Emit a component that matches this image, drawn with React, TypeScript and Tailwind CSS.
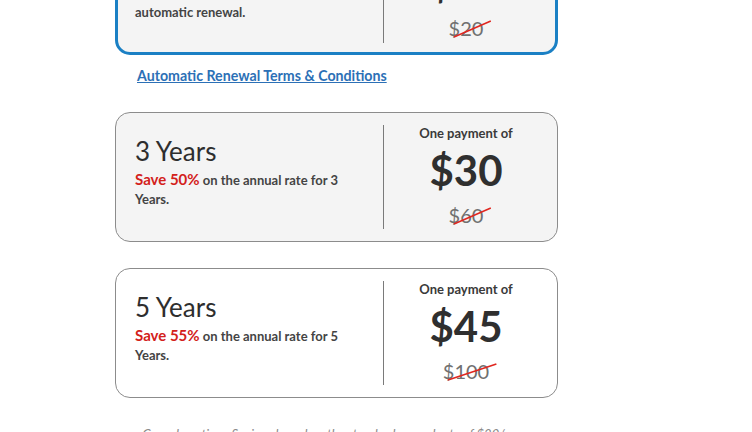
import React from "react";

interface PlanCardProps {
	title: string;
	save: string;
	rest: string;
	price: string;
	was: string;
	featured?: boolean;
	shaded?: boolean;
}

const StrikePrice = ({ value }: { value: string }) => (
	<span className="relative inline-block text-[20px] leading-[24px] text-[#707070]">
		{value}
		{/* red slash across the old price */}
		<svg
			className="absolute top-[5px] left-[5px] h-[16px] w-[calc(100%+2px)] overflow-visible"
			viewBox="0 0 100 100"
			preserveAspectRatio="none"
		>
			<line x1="0" y1="100" x2="100" y2="0" stroke="#e0261f" strokeWidth="1.6" vectorEffect="non-scaling-stroke" />
		</svg>
	</span>
);

const PlanCard = ({ title, save, rest, price, was, featured, shaded }: PlanCardProps) => (
	<div
		className={`flex h-[130px] w-[443px] rounded-[15px] ${
			featured ? "border-[3px] border-[#1b80c4]" : "border border-[#8c8c8c]"
		} ${shaded ? "bg-[#f4f4f4]" : "bg-white"}`}
	>
		<div className={`flex-1 ${featured ? "pl-[17px] pt-[21px]" : "pl-[19px] pt-[23px]"}`}>
			<h3 className="text-[26px] leading-[30px] text-[#2e2e2e]">{title}</h3>
			<p className="mt-[4px] max-w-[215px] text-[13px] font-bold leading-[19px] text-[#444]">
				<span className="text-[15px] leading-[19px] text-[#d3211b]">{save}</span> {rest}
			</p>
		</div>
		<div className={`w-px bg-[#7a7a7a] ${featured ? "mt-[10px] mb-[9px]" : "my-[12px]"}`} />
		<div className={`flex w-[164px] flex-col items-center ${featured ? "mr-[7px] pt-[10px]" : "mr-[9px] pt-[12px]"}`}>
			<span className="text-[13px] font-bold leading-[16px] text-[#3a3a3a]">One payment of</span>
			<span className="mt-[6px] text-[42px] font-bold leading-[46px] text-[#2f2f2f]">{price}</span>
			<span className="mt-[10px]">
				<StrikePrice value={was} />
			</span>
		</div>
	</div>
);

export default function App() {
	return (
		<div className="h-[432px] overflow-hidden bg-white font-['Lato',sans-serif]">
			<div className="-mt-[75px] ml-[115px] w-[443px]">
				<PlanCard
					featured
					shaded
					title="1 Year"
					save="Save 25%"
					rest="on the annual rate with automatic renewal."
					price="$15"
					was="$20"
				/>
				<a href="#" className="mt-[12px] ml-[22px] block text-[14.2px] font-bold leading-[18px] text-[#2c70b6] underline">
					Automatic Renewal Terms &amp; Conditions
				</a>
				<div className="mt-[27px]">
					<PlanCard shaded title="3 Years" save="Save 50%" rest="on the annual rate for 3 Years." price="$30" was="$60" />
				</div>
				<div className="mt-[26px]">
					<PlanCard title="5 Years" save="Save 55%" rest="on the annual rate for 5 Years." price="$45" was="$100" />
				</div>
				<p className="mt-[27px] text-center text-[13px] italic leading-[18px] text-[#8a8a8a]">
					Cancel anytime. Savings based on the standard annual rate of $20/year.
				</p>
			</div>
		</div>
	);
}
